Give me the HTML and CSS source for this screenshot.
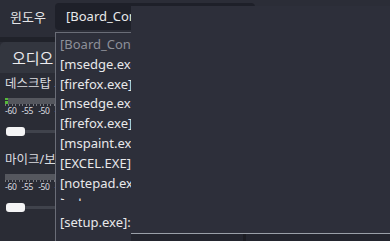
FILE: index.html
```html
<!DOCTYPE html>
<html lang="ko">
<head>
<meta charset="utf-8">
<link rel="stylesheet" href="styles.css">
</head>
<body>
<div class="app">
  <div class="topbar">
    <span class="label">윈도우</span>
    <div class="combo">[Board_Control.exe]: Board Control</div>
  </div>
  <div class="band"></div>
  <div class="tabs">
    <div class="tab">오디오</div>
  </div>
  <div class="mixer">
    <div class="channel">
      <div class="ch-name">데스크탑 오디오</div>
      <div class="meter"><span class="peak"></span></div>
      <div class="ticks"></div>
      <div class="scale"><span>-60</span><span>-55</span><span>-50</span><span>-45</span></div>
      <div class="slider"><span class="knob"></span></div>
    </div>
    <div class="channel">
      <div class="ch-name">마이크/보조 오디오</div>
      <div class="meter"></div>
      <div class="ticks"></div>
      <div class="scale"><span>-60</span><span>-55</span><span>-50</span><span>-45</span></div>
      <div class="slider"><span class="knob"></span></div>
    </div>
  </div>

  <ul class="dropdown">
    <li class="muted">[Board_Control.exe]: Board Control</li>
    <li>[msedge.exe]: New Tab - Microsoft Edge</li>
    <li>[firefox.exe]: Mozilla Firefox</li>
    <li>[msedge.exe]: Settings - Microsoft Edge</li>
    <li>[firefox.exe]: Library</li>
    <li>[mspaint.exe]: Untitled - Paint</li>
    <li>[EXCEL.EXE]: Book1 - Excel</li>
    <li>[notepad.exe]: Untitled - Notepad</li>
    <li class="cut"><span>[explorer.exe]: Downloads</span></li>
    <li>[setup.exe]: Setup</li>
  </ul>

  <div class="overlay"></div>
  <div class="under"><span class="divider"></span></div>
</div>
</body>
</html>
```
FILE: styles.css
```css
* { box-sizing: border-box; }
html, body { margin: 0; padding: 0; }
body {
  width: 390px;
  height: 241px;
  overflow: hidden;
  background: #2a2c35;
  font-family: "Noto Sans", "Noto Sans CJK KR", sans-serif;
  color: #e4e5e8;
}
.app { position: relative; width: 390px; height: 241px; }

.topbar {
  height: 37px;
  background: #2b2d37;
  display: flex;
  align-items: center;
  padding: 0 0 4px 10px;
}
.label { font-size: 13px; width: 45px; color: #e6e6e8; }
.combo {
  width: 200px;
  height: 27px;
  background: #1e2029;
  border-radius: 4px;
  padding: 0 0 0 11px;
  font-size: 13px;
  line-height: 27px;
  white-space: nowrap;
  overflow: hidden;
  color: #e8e8ea;
}
.band { height: 5px; background: #20222a; }
.tabs { height: 31px; display: flex; }
.tab {
  width: 70px;
  background: #33363f;
  border-radius: 5px 5px 0 0;
  font-size: 15px;
  padding: 5px 0 0 12px;
  color: #ececee;
}
.mixer { padding: 4px 0 0 5px; }
.channel { width: 120px; }
.ch-name { font-size: 12.5px; line-height: 14px; height: 16px; white-space: nowrap; color: #dcdde0; }
.channel + .channel .ch-name { margin-top: 17px; }
.meter {
  margin-top: 5px;
  height: 6px;
  background: #55575e;
  position: relative;
}
.peak {
  position: absolute; left: 0; top: 0; width: 3px; height: 6px;
  background: linear-gradient(#56b83a 0 2px, #2a2c35 2px 3px, #56b83a 3px 6px);
}
.ticks {
  height: 2px;
  background: repeating-linear-gradient(90deg, #777980 0 1px, transparent 1px 3.5px);
}
.scale {
  display: flex;
  gap: 5px;
  font-size: 8.5px;
  line-height: 10px;
  color: #dcdde0;
  letter-spacing: -0.3px;
}
.slider {
  margin-top: 11px;
  height: 9px;
  position: relative;
  display: flex;
  align-items: center;
}
.slider::before {
  content: "";
  position: absolute; left: 2px; right: 0; top: 3px; height: 3px;
  background: #40434c;
}
.knob {
  position: relative;
  margin-left: 1px;
  width: 19px; height: 9px;
  border-radius: 3px;
  background: #f4f4f5;
}

.dropdown {
  position: absolute;
  left: 55px; top: 32px;
  width: 220px;
  margin: 0; padding: 2px 0 0 4px;
  list-style: none;
  background: #2d2f3a;
  border-left: 1px solid #6a6d77;
  border-top: 1px solid #6a6d77;
  height: 210px;
}
.dropdown li {
  height: 19.8px;
  line-height: 19.8px;
  font-size: 13px;
  white-space: nowrap;
  color: #e8e8ea;
}
.dropdown li.muted { color: #8d9099; }
.dropdown li.cut { overflow: hidden; height: 19.8px; position: relative; }
.dropdown li.cut span {
  display: block;
  position: absolute; left: 0; top: 0;
  clip-path: inset(14px 0 0 0);
  transform: translateY(-9px);
}

.overlay {
  position: absolute;
  left: 131px; top: 6px; right: 0; height: 227px;
  background: #2d2f3a;
}
.under {
  position: absolute;
  left: 131px; right: 0; top: 233px; bottom: 0;
  background: #23252e;
  border-top: 1px solid #9aa0a8;
}
.divider {
  position: absolute; left: 112px; top: 0; width: 3px; height: 8px;
  background: #1b1c22;
}
```
